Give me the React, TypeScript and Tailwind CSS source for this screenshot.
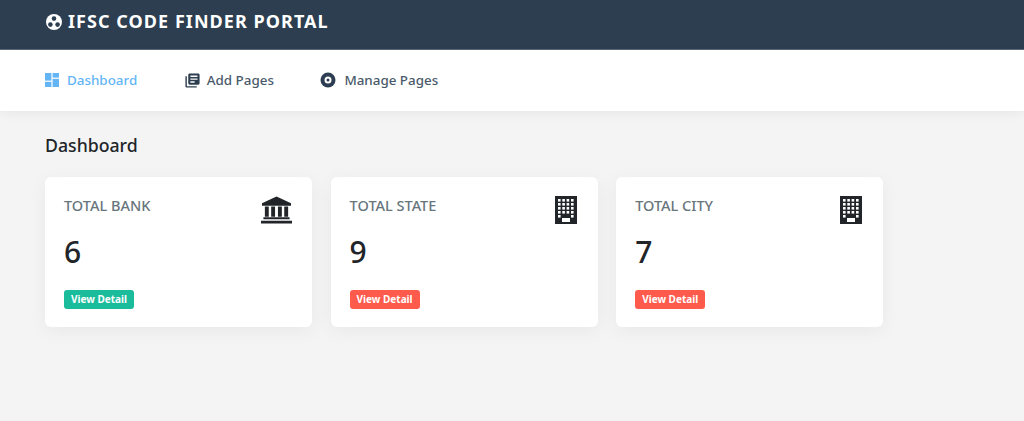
import React from "react";

const font = { fontFamily: '"Noto Sans", "Open Sans", sans-serif' };

const LogoIcon = () => (
  <svg viewBox="0 0 18 18" className="w-[18px] h-[18px]">
    <circle cx="9" cy="9" r="8" fill="#ffffff" />
    <circle cx="9" cy="5.6" r="2.3" fill="#2c3e50" />
    <circle cx="5.4" cy="11.6" r="2.3" fill="#2c3e50" />
    <circle cx="12.6" cy="11.6" r="2.3" fill="#2c3e50" />
  </svg>
);

const DashboardIcon = () => (
  <svg viewBox="0 0 14 14" className="w-[14px] h-[14px]" fill="#64b5f6">
    <rect x="0" y="0" width="6.4" height="7.6" />
    <rect x="7.6" y="0" width="6.4" height="4.6" />
    <rect x="0" y="8.8" width="6.4" height="5.2" />
    <rect x="7.6" y="5.8" width="6.4" height="8.2" />
  </svg>
);

const PagesIcon = () => (
  <svg viewBox="0 0 24 24" className="w-[17px] h-[17px]" fill="#2c3e50">
    <path d="M4 6H2v14c0 1.1.9 2 2 2h14v-2H4V6zm16-4H8c-1.1 0-2 .9-2 2v12c0 1.1.9 2 2 2h12c1.1 0 2-.9 2-2V4c0-1.1-.9-2-2-2zm-1 9H9V9h10v2zm-4 4H9v-2h6v2zm4-8H9V5h10v2z" />
  </svg>
);

const DiscIcon = () => (
  <svg viewBox="0 0 16 16" className="w-[16px] h-[16px]">
    <circle cx="8" cy="8" r="7.500" fill="#2c3e50" />
    <circle cx="8" cy="8" r="3.500" fill="#ffffff" />
    <circle cx="8" cy="8" r="1.500" fill="#2c3e50" />
  </svg>
);

const BankIcon = () => (
  <svg viewBox="0 0 32 28" className="w-[31px] h-[28px]" fill="#212529">
    <path d="M16 0 1 7v2.500h30V7L16 0z" />
    <path d="M4 10.500h4V21H4zM10.500 10.500H14.500V21h-4zM17.500 10.500h4V21h-4zM24 10.500h4V21h-4z" />
    <path d="M2.500 21.500h27v2h-27zM0 25h32v3H0z" />
  </svg>
);

const BuildingIcon = () => (
  <svg viewBox="0 0 22 28" className="w-[22px] h-[28px] mr-[1px]">
    <rect width="22" height="28" fill="#212529" />
    {[3, 7.300, 11.600, 16].map((x) =>
      [3, 7, 11, 15, 19].map((y) =>
        y === 19 && (x === 7.300 || x === 11.600) ? null : (
          <rect key={`${x}-${y}`} x={x} y={y} width="2.600" height="2.600" fill="#ffffff" />
        )
      )
    )}
    <rect x="7" y="22" width="8" height="4" fill="#ffffff" />
  </svg>
);

const stats = [
  { title: "TOTAL BANK", value: "6", icon: <BankIcon />, button: "bg-[#1abc9c]" },
  { title: "TOTAL STATE", value: "9", icon: <BuildingIcon />, button: "bg-[#ff5b4c]" },
  { title: "TOTAL CITY", value: "7", icon: <BuildingIcon />, button: "bg-[#ff5b4c]" },
];

const App: React.FC = () => {
  return (
    <div style={font} className="w-[1024px] h-[421px] overflow-hidden bg-[#f4f4f4] text-[#212529]">
      <header className="h-[50px] bg-[#2c3e50] border-b border-[#5a6a78] pl-[45px] pb-[6px] flex items-center gap-[5px]">
        <LogoIcon />
        <h1 className="text-[18px] font-bold tracking-[1.05px] text-white">IFSC CODE FINDER PORTAL</h1>
      </header>

      <nav className="h-[61px] bg-white pl-[45px] flex items-center gap-[46.5px] shadow-[0_2px_12px_rgba(0,0,0,0.06)] text-[13.4px] font-medium text-[#4a5a6a]">
        <a className="flex items-center gap-[8px] text-[#64b5f6]">
          <DashboardIcon />
          Dashboard
        </a>
        <a className="flex items-center gap-[6px]">
          <PagesIcon />
          Add Pages
        </a>
        <a className="flex items-center gap-[8px]">
          <DiscIcon />
          Manage Pages
        </a>
      </nav>

      <main className="pl-[45px] pt-[22px]">
        <h2 className="text-[17.7px] leading-[24px] font-medium">Dashboard</h2>
        <div className="mt-[20px] flex gap-[18.6px]">
          {stats.map((s) => (
            <div key={s.title} className="w-[267px] h-[150px] bg-white rounded-[6px] shadow-[0_4px_20px_rgba(0,0,0,0.05)] pl-[19px] pr-[20px] pt-[19px]">
              <div className="flex justify-between items-start">
                <div className="mt-[-1px] text-[14.5px] leading-[20px] font-medium text-[#67757c]">{s.title}</div>
                {s.icon}
              </div>
              <div className="mt-[8px] text-[30px] leading-[40px] font-medium">{s.value}</div>
              <button className={`mt-[18px] block h-[19px] w-[70px] rounded-[3px] text-[10px] font-bold text-white ${s.button}`}>
                View Detail
              </button>
            </div>
          ))}
        </div>
      </main>
    </div>
  );
};

export default App;
